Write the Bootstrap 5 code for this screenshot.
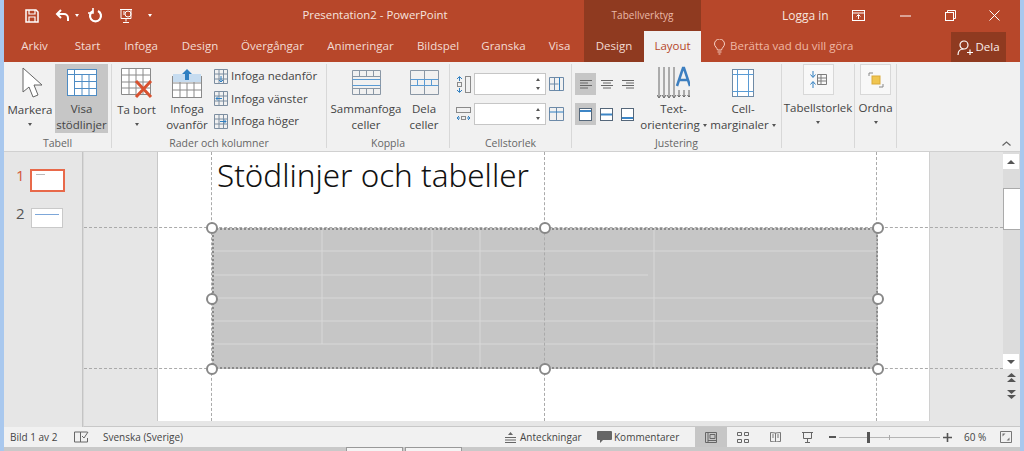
<!DOCTYPE html>
<html lang="sv">
<head>
  <meta charset="UTF-8" />
  <title>Presentation2 - PowerPoint</title>
  <meta name="viewport" content="width=device-width, initial-scale=1">
  <link href="https://cdn.jsdelivr.net/npm/bootstrap@5.3.3/dist/css/bootstrap.min.css" rel="stylesheet">
  <style>
    html, body { height: 451px; overflow: hidden; }
    body { font-family: "Open Sans", "Noto Sans", sans-serif; font-size: 11.5px; color: #444; background: #a9c8ee; line-height: 1.25; }
    svg { display: block; flex: none; }
    .app-win { margin: 0 4px; height: 447px; background: #e6e6e6; display: flex; flex-direction: column; }
    .below-win { height: 4px; background: #c9c9c9; margin: 0 4px; display: flex; padding-left: 342px; gap: 2px; }
    .below-win span { border: 1px solid #999; border-bottom: 0; width: 57px; background: #f4f4f4; }

    /* title bar */
    .title-row { height: 31px; background: #b7472a; color: #fff; position: relative; display: flex; align-items: center; }
    .qat { display: flex; align-items: center; padding-left: 21px; width: 580px; }
    .qat .drop-mark { border-top-color: #fff; }
    .doc-name { position: absolute; left: 271px; width: 200px; text-align: center; font-size: 11.4px; color: #f6e4de; }
    .ctx-head { width: 117px; height: 31px; background: #8f3a20; color: #eab9a8; font-size: 10px; display: flex; align-items: center; justify-content: center; }
    .win-ctl { display: flex; align-items: center; flex: 1; color: #f6e4de; }
    .login { margin-left: 81px; width: 46px; font-size: 12px; white-space: nowrap; }
    .wc-a { margin-left: 24px; }
    .wc-b { margin-left: 35px; }
    .wc-c { margin-left: 34px; }
    .wc-d { margin-left: 33px; }
    .qat-gap { margin-left: 13px; }

    /* tabs */
    .tab-row { height: 31px; background: #b7472a; display: flex; align-items: stretch; color: #f3dcd4; }
    .tab-item { display: flex; align-items: center; justify-content: center; }
    .tw-arkiv { width: 61px; }
    .tw-start { width: 45px; }
    .tw-infoga { width: 62px; }
    .tw-design { width: 56px; }
    .tw-over { width: 89px; }
    .tw-anim { width: 87px; }
    .tw-bild { width: 68px; }
    .tw-gran { width: 63px; }
    .tw-visa { width: 49px; }
    .tw-ctx { width: 60px; }
    .tw-layout { width: 57px; }
    .tab-ctx { background: #8f3a20; }
    .tab-on { background: #f1f1f1; color: #b7472a; }
    .tell-me { display: flex; align-items: center; gap: 5px; margin-left: 13px; width: 237px; color: #efb7a4; }
    .share-btn { width: 55px; background: #8f3a20; color: #fbeee9; display: flex; align-items: center; justify-content: center; gap: 2px; margin: 1px 0 0; }

    /* ribbon */
    .rib { height: 89px; background: #f1f1f1; display: flex; border-bottom: 1px solid #d0d0d0; box-sizing: content-box; position: relative; color: #444; }
    .rib-grp { position: relative; height: 84px; margin-top: 2px; border-right: 1px solid #d8d8d8; padding-bottom: 15px; display: flex; }
    .gw-tabell { width: 108px; }
    .gw-rader { width: 215px; padding-left: 4px; }
    .gw-koppla { width: 123px; padding-left: 3px; }
    .gw-size { width: 122px; padding-left: 6px; }
    .gw-just { width: 210px; padding-left: 3px; }
    .gw-tblsize { width: 73px; justify-content: center; }
    .gw-ordna { width: 42px; justify-content: center; }
    .grp-name { position: absolute; left: 0; right: 0; bottom: -2px; text-align: center; font-size: 10.5px; color: #666; }
    .big-btn { display: flex; flex-direction: column; align-items: center; height: 69px; text-align: center; line-height: 16px; white-space: nowrap; }
    .big-btn .pic { height: 38px; display: flex; align-items: center; justify-content: center; }
    .big-on { background: #c6c6c6; }
    .bw-markera { width: 50px; margin-left: 1px; }
    .bw-markera svg { margin-left: 5px; }
    .bw-visa { width: 53px; }
    .bw-tabort { width: 41px; }
    .bw-ovan { width: 50px; margin-left: 5px; }
    .bw-samman { width: 72px; }
    .bw-dela { width: 44px; }
    .bw-text { width: 67px; }
    .bw-cell { width: 72px; }
    .drop-mark { width: 0; height: 0; border: 2.5px solid transparent; border-top: 3px solid #555; border-bottom: 0; display: inline-block; vertical-align: middle; }
    .big-btn > .drop-mark { margin-top: 5px; }
    .small-list { display: flex; flex-direction: column; gap: 6px; padding-top: 4px; margin-left: 2px; }
    .small-btn { display: flex; align-items: center; gap: 3px; height: 16.5px; white-space: nowrap; }
    .cell-stack { display: flex; flex-direction: column; gap: 8px; padding-top: 9px; }
    .cell-stack.align-part { width: 65px; }
    .size-row { display: flex; align-items: center; gap: 3px; }
    .size-box { width: 72px; height: 22px; background: #fff; border: 1px solid #c6c6c6; position: relative; }
    .size-box::before, .size-box::after { content: ""; position: absolute; right: 5px; border: 2.5px solid transparent; }
    .size-box::before { top: 4px; border-bottom: 3px solid #555; border-top: 0; }
    .size-box::after { bottom: 4px; border-top: 3px solid #555; border-bottom: 0; }
    .align-cell { width: 21px; height: 22px; display: flex; align-items: center; justify-content: center; }
    .align-on { background: #c6c6c6; }
    .box-btn { width: 31px; height: 31px; background: #f8f8f8; border: 1px solid #d8d8d8; display: flex; align-items: center; justify-content: center; margin-bottom: 5px; }
    .rib-fold { position: absolute; right: 9px; bottom: 5px; }

    /* work area */
    .work-row { flex: 1; min-height: 0; display: flex; }
    .thumb-pane { width: 79px; flex: none; background: #e6e6e6; border-right: 1px solid #c4c4c4; padding-top: 17px; }
    .thumb-row { display: flex; gap: 5px; padding-left: 12px; font-size: 15px; align-items: flex-start; height: 20px; margin-bottom: 19px; line-height: 1; color: #555; }
    .thumb-row > span { margin-top: -1px; }
    .thumb-row.is-cur { color: #d4583a; }
    .thumb-row:not(.is-cur) > span { margin-top: -2px; }
    .thumb-pic { width: 32px; height: 20px; background: #fff; border: 1px solid #c9c9c9; position: relative; margin-left: 1px; }
    .is-cur .thumb-pic { width: 35px; height: 23px; border: 2px solid #e8694a; margin-left: 0; }
    .is-cur .thumb-pic::after { content: ""; position: absolute; left: 4px; top: 3px; width: 9px; height: 1px; background: #bbb; }
    .thumb-pic i { position: absolute; left: 3px; right: 3px; top: 5px; height: 1px; background: #7da7d9; }

    .stage-wrap { flex: 1; min-width: 0; position: relative; border-bottom: 1px solid #c8c8c8; border-left: 1px solid #d8d8d8; display: flex; justify-content: center; }
    .slide-sheet { position: absolute; left: 73px; top: 0; bottom: 5px; width: 773px; background: #fff; border-left: 1px solid #c8c8c8; border-right: 1px solid #d0d0d0; }
    .slide-head { position: absolute; left: 133px; top: 1px; font-family: "Noto Sans", "Open Sans", sans-serif; font-weight: 300; font-size: 31.4px; line-height: 44px; color: #111; white-space: nowrap; }
    .guide-h { position: absolute; left: 0; width: 919px; border-top: 1px dashed #aaa; }
    .gh-top { top: 75px; }
    .gh-bot { top: 216px; }
    .guide-v { position: absolute; top: 0; bottom: 5px; border-left: 1px dashed #aaa; }
    .gv-l { left: 127px; }
    .gv-m { left: 460px; }
    .gv-r { left: 792px; }
    .tbl-area { position: absolute; left: 128px; top: 76px; width: 666px; height: 141px; background: #c6c6c6; border: 2px dotted #8a8a8a; }
    .tbl-area svg { width: 100%; height: 100%; }
    .grab { position: absolute; width: 12px; height: 12px; border-radius: 50%; background: #fff; border: 2px solid #888; margin: -6px 0 0 -6px; }
    .gx-l { left: 128px; }
    .gx-m { left: 461px; }
    .gx-r { left: 794px; }
    .gy-t { top: 76px; }
    .gy-m { top: 147px; }
    .gy-b { top: 217px; }

    .scroll-col { width: 17px; flex: none; background: #dcdcdc; position: relative; display: flex; flex-direction: column; align-items: stretch; margin-left: auto; }
    .sc-btn { height: 15px; margin: 2px 1px 0 0; background: #fff; display: flex; align-items: center; justify-content: center; }
    .sc-btn .drop-mark { border-width: 4px; border-top-width: 4px; border-bottom: 0; }
    .sc-btn .up-mark { border-top: 0; border-bottom: 4px solid #555; }
    .sc-thumb { height: 42px; margin-top: 19px; background: #fff; border: 1px solid #aaa; border-right: 0; }
    .sc-gap { flex: 1; }
    .sc-tail { background: #e6e6e6; height: 57px; display: flex; flex-direction: column; align-items: center; gap: 6px; padding-top: 4px; }

    /* status bar */
    .stat-row { height: 20px; background: #f1f1f1; display: flex; align-items: center; font-size: 10px; color: #444; flex: none; white-space: nowrap; }
    .stat-left { width: 501px; display: flex; align-items: center; padding-left: 6px; }
    .st-bild { width: 64px; }
    .st-book { margin-right: 14px; }
    .st-note { margin-left: 4px; width: 77px; }
    .st-comm { margin-left: 2px; width: 81px; }
    .view-cell { height: 20px; width: 32px; display: flex; align-items: center; justify-content: center; }
    .view-a { width: 32px; }
    .zoom-minus { margin-left: 6px; }
    .zoom-track { position: relative; width: 101px; height: 1px; background: #b5b5b5; margin: 0 3px; }
    .zoom-thumb { position: absolute; left: 28px; top: -5px; width: 3px; height: 11px; background: #555; }
    .zoom-tick { position: absolute; left: 50px; top: -2px; width: 1px; height: 5px; background: #aaa; }
    .zoom-val { margin-left: 12px; width: 36px; }
  </style>
</head>
<body>
<div class="app-win">
  <div class="title-row">
    <div class="qat">
      <svg width="14" height="14" viewBox="0 0 14 14" fill="none" stroke="#fff" stroke-width="1.5"><path d="M1 1h10l2 2v10H1z"/><path d="M4 1v4h6V1M4 13V8h6v5" stroke-width="1.2"/></svg>
      <svg class="ms-3" width="16" height="14" viewBox="0 0 16 14" fill="none" stroke="#fff" stroke-width="2"><path d="M6 1 2 5l4 4"/><path d="M2 5h7a4 4 0 0 1 4 4v3"/></svg>
      <span class="drop-mark ms-1"></span>
      <svg class="ms-2" width="16" height="16" viewBox="0 0 16 16" fill="none" stroke="#fff" stroke-width="2.2"><path d="M6 3a5.500 5.500 0 1 0 5 0"/><path d="M6 0v5H1" stroke-width="1.6"/></svg>
      <svg class="ms-3" width="16" height="16" viewBox="0 0 16 16" fill="none" stroke="#fff" stroke-width="1"><path d="M1 1.500h12M2 1.500v9h10v-9M7 10.500v3M4 14.500h6"/><circle cx="9" cy="6" r="3"/><path d="M4 4h2M4 6h2"/></svg>
      <span class="drop-mark qat-gap"></span>
    </div>
    <div class="doc-name">Presentation2 - PowerPoint</div>
    <div class="ctx-head">Tabellverktyg</div>
    <div class="win-ctl">
      <div class="login">Logga in</div>
      <svg class="wc-a" width="13" height="11" viewBox="0 0 13 11" fill="none" stroke="#fff"><rect x=".5" y=".5" width="12" height="10"/><path d="M.5 3h12M6.500 9V5M4.500 6.500l2-2 2 2"/></svg>
      <svg class="wc-b" width="11" height="2" viewBox="0 0 11 2"><path d="M0 1h11" stroke="#fff"/></svg>
      <svg class="wc-c" width="11" height="11" viewBox="0 0 11 11" fill="none" stroke="#fff"><rect x=".5" y="2.500" width="8" height="8"/><path d="M2.500 2.500v-2h8v8h-2"/></svg>
      <svg class="wc-d" width="11" height="11" viewBox="0 0 11 11" fill="none" stroke="#fff"><path d="M.5.500l10 10M10.500.500l-10 10"/></svg>
    </div>
  </div>

  <div class="tab-row">
    <div class="tab-item tw-arkiv">Arkiv</div>
    <div class="tab-item tw-start">Start</div>
    <div class="tab-item tw-infoga">Infoga</div>
    <div class="tab-item tw-design">Design</div>
    <div class="tab-item tw-over">Övergångar</div>
    <div class="tab-item tw-anim">Animeringar</div>
    <div class="tab-item tw-bild">Bildspel</div>
    <div class="tab-item tw-gran">Granska</div>
    <div class="tab-item tw-visa">Visa</div>
    <div class="tab-item tab-ctx tw-ctx">Design</div>
    <div class="tab-item tab-on tw-layout">Layout</div>
    <div class="tell-me">
      <svg width="11" height="16" viewBox="0 0 11 16" fill="none" stroke="#f6cfc2"><path d="M3.500 11C3 8.500.5 7.500.5 5a5 5 0 0 1 10 0c0 2.500-2.500 3.500-3 6z"/><path d="M3.500 13h4M4.500 15h2"/></svg>
      <span>Berätta vad du vill göra</span>
    </div>
    <div class="share-btn">
      <svg width="16" height="15" viewBox="0 0 16 15" fill="none" stroke="#fff" stroke-width="1.2"><circle cx="7" cy="5" r="4"/><path d="M1 15c0-4 2.500-6 5.500-6M10 12.500h6M13 9.500v6"/></svg>
      <span>Dela</span>
    </div>
  </div>

  <div class="rib">
    <div class="rib-grp gw-tabell">
      <div class="big-btn bw-markera">
        <div class="pic"><svg width="22" height="33" viewBox="0 0 22 33" fill="#fff" stroke="#666"><path d="M1 1v24l6-5 4 10 5-2-4-10h8z"/></svg></div>
        <span>Markera</span>
        <span class="drop-mark"></span>
      </div>
      <div class="big-btn big-on bw-visa">
        <div class="pic"><svg width="30" height="27" viewBox="0 0 30 27" fill="none" stroke="#4e8cc4"><rect x=".5" y=".5" width="29" height="26" fill="#fff"/><path d="M.5 5.500h29M7.500.5v26M7.500 12.500h22M7.500 19.500h22M15 5.500v21M22 5.500v21"/></svg></div>
        <span>Visa<br>stödlinjer</span>
      </div>
      <div class="grp-name">Tabell</div>
    </div>

    <div class="rib-grp gw-rader">
      <div class="big-btn bw-tabort">
        <div class="pic"><svg width="32" height="31" viewBox="0 0 32 31" fill="none"><path d="M.5.500h29v26H.5zM.5 7h29M.5 14h29M.5 20h29M8 .500v26M15 .500v26M22 .500v26" stroke="#8a8a8a" fill="#fff"/><path d="M15 13l15 16M30 13 15 29" stroke="#d8512f" stroke-width="3"/></svg></div>
        <span>Ta bort</span>
        <span class="drop-mark"></span>
      </div>
      <div class="big-btn bw-ovan">
        <div class="pic"><svg width="30" height="30" viewBox="0 0 30 30" fill="none"><rect x=".5" y="8.500" width="29" height="21" fill="#fff" stroke="#8a8a8a"/><path d="M.5 15h29M.5 22h29M8 8.500v21M15 15v15M22 8.500v21" stroke="#8a8a8a"/><rect x="1" y="6" width="28" height="8" fill="#c6dcf0"/><path d="M15 1l5 5h-3v6h-4V6h-3z" fill="#2f7fc1"/></svg></div>
        <span>Infoga<br>ovanför</span>
      </div>
      <div class="small-list">
        <div class="small-btn"><svg width="14" height="15" viewBox="0 0 14 15" fill="none" stroke="#7d8ea0"><path d="M.5.500h13v14H.5zM5 .500v14M9.500.500v14M.5 5h13M.5 10h13"/><path d="M7 7v6M5 11l2 2 2-2" stroke="#2f7fc1"/></svg><span>Infoga nedanför</span></div>
        <div class="small-btn"><svg width="14" height="15" viewBox="0 0 14 15" fill="none" stroke="#7d8ea0"><path d="M.5.500h13v14H.5zM5 .500v14M9.500.500v14M.5 5h13M.5 10h13"/><path d="M8 7.500H2M4 5.500l-2 2 2 2" stroke="#2f7fc1"/></svg><span>Infoga vänster</span></div>
        <div class="small-btn"><svg width="14" height="15" viewBox="0 0 14 15" fill="none" stroke="#7d8ea0"><path d="M.5.500h13v14H.5zM5 .500v14M9.500.500v14M.5 5h13M.5 10h13"/><path d="M6 7.500h6M10 5.500l2 2-2 2" stroke="#2f7fc1"/></svg><span>Infoga höger</span></div>
      </div>
      <div class="grp-name">Rader och kolumner</div>
    </div>

    <div class="rib-grp gw-koppla">
      <div class="big-btn bw-samman">
        <div class="pic"><svg width="29" height="25" viewBox="0 0 29 25" fill="none" stroke="#8a97a5"><path d="M.5.500h28v24H.5zM.5 6.500h28M.5 18.500h28M7.500.500v6M14.500.500v6M21.500.500v6M7.500 18.500v6M14.500 18.500v6M21.500 18.500v6"/><path d="M.5 9.500h28M.5 15.500h28" stroke="#5a9bd4"/></svg></div>
        <span>Sammanfoga<br>celler</span>
      </div>
      <div class="big-btn bw-dela">
        <div class="pic"><svg width="29" height="25" viewBox="0 0 29 25" fill="none" stroke="#8a97a5"><path d="M.5.500h28v24H.5zM.5 9.500h28M.5 15.500h28M14.500.500v9M14.500 15.500v9"/><path d="M7.500 9.500v6M14.500 9.500v6M21.500 9.500v6M.5 9.500h28M.5 15.500h28" stroke="#5a9bd4"/></svg></div>
        <span>Dela<br>celler</span>
      </div>
      <div class="grp-name">Koppla</div>
    </div>

    <div class="rib-grp gw-size">
      <div class="cell-stack">
        <div class="size-row">
          <svg width="15" height="17" viewBox="0 0 15 17" fill="none" stroke="#2f7fc1"><path d="M3.500 1v4M3.500 12v4M1 3l2.500-2.500L6 3M1 14l2.500 2.500L6 14"/><rect x="1.500" y="6.500" width="4" height="4" stroke="#8a8a8a"/><rect x="9.500" y=".5" width="5" height="16" stroke="#8a8a8a"/></svg>
          <div class="size-box"></div>
          <svg width="15" height="14" viewBox="0 0 15 14" fill="none" stroke="#6d8aa8"><path d="M.5.500h14v13H.5zM5.500.500v13M.5 7h9"/><path d="M10.500 .5v13" stroke="#2f7fc1"/></svg>
        </div>
        <div class="size-row">
          <svg width="15" height="17" viewBox="0 0 15 17" fill="none" stroke="#2f7fc1"><rect x=".5" y="1.500" width="14" height="5" stroke="#8a8a8a"/><path d="M1 12h3M11 12h3M3 10l-2 2 2 2M12 10l2 2-2 2"/><rect x="5.500" y="10.500" width="4" height="3" stroke="#8a8a8a"/></svg>
          <div class="size-box"></div>
          <svg width="15" height="14" viewBox="0 0 15 14" fill="none" stroke="#6d8aa8"><path d="M.5.500h14v13H.5zM7.500 .5v13"/><path d="M.5 5h14" stroke="#2f7fc1"/></svg>
        </div>
      </div>
      <div class="grp-name">Cellstorlek</div>
    </div>

    <div class="rib-grp gw-just">
      <div class="cell-stack align-part">
        <div class="d-flex">
          <div class="align-cell align-on"><svg width="12" height="9" viewBox="0 0 12 9" stroke="#666"><path d="M0 .5h12M0 3h8M0 5.500h12M0 8h8"/></svg></div>
          <div class="align-cell"><svg width="12" height="9" viewBox="0 0 12 9" stroke="#666"><path d="M0 .5h12M2 3h8M0 5.500h12M2 8h8"/></svg></div>
          <div class="align-cell"><svg width="12" height="9" viewBox="0 0 12 9" stroke="#666"><path d="M0 .5h12M4 3h8M0 5.500h12M4 8h8"/></svg></div>
        </div>
        <div class="d-flex">
          <div class="align-cell align-on"><svg width="13" height="13" viewBox="0 0 13 13" fill="#fff" stroke="#55677a"><rect x=".5" y=".5" width="12" height="12"/><path d="M1 3h11" stroke="#3d86c6" stroke-width="2"/></svg></div>
          <div class="align-cell"><svg width="13" height="13" viewBox="0 0 13 13" fill="#fff" stroke="#55677a"><rect x=".5" y=".5" width="12" height="12"/><path d="M1 6.500h11" stroke="#3d86c6" stroke-width="2"/></svg></div>
          <div class="align-cell"><svg width="13" height="13" viewBox="0 0 13 13" fill="#fff" stroke="#55677a"><rect x=".5" y=".5" width="12" height="12"/><path d="M1 10h11" stroke="#3d86c6" stroke-width="2"/></svg></div>
        </div>
      </div>
      <div class="big-btn bw-text">
        <div class="pic"><svg width="33" height="34" viewBox="0 0 33 34" fill="none"><path d="M2 1v30M7 1v30M12 1v30M17 1v30M0 29l2 3 2-3M5 29l2 3 2-3M10 29l2 3 2-3M15 29l2 3 2-3" stroke="#666"/><path d="M20 20 26 2h1l6 18M22.500 14h8" stroke="#3d7fc0" stroke-width="2.500"/><path d="M22 24v7M27 24v7M32 24v7M20.500 29l1.500 2 1.500-2M25.500 29l1.500 2 1.500-2M30.500 29l1.500 2 1.500-2" stroke="#666"/></svg></div>
        <span>Text-<br>orientering <span class="drop-mark"></span></span>
      </div>
      <div class="big-btn bw-cell">
        <div class="pic"><svg width="22" height="28" viewBox="0 0 22 28" fill="#fff" stroke="#6f8aa5"><rect x=".5" y=".5" width="21" height="27"/><path d="M5.500.500v27M16.500.500v27M.5 5.500h21M.5 22.500h21" stroke="#5a9bd4"/></svg></div>
        <span>Cell-<br>marginaler <span class="drop-mark"></span></span>
      </div>
      <div class="grp-name">Justering</div>
    </div>

    <div class="rib-grp gw-tblsize">
      <div class="big-btn">
        <div class="box-btn"><svg width="18" height="17" viewBox="0 0 18 17" fill="none"><path d="M4 0v6M1.500 3.500 4 6.500l2.500-3M4 17v-6M1.500 13.500 4 10.500l2.500 3" stroke="#2f7fc1"/><path d="M8.500 3.500h9v10h-9zM8.500 7h9M8.500 10h9M12 3.500v10" stroke="#7d7d7d"/></svg></div>
        <span>Tabellstorlek</span>
        <span class="drop-mark"></span>
      </div>
    </div>

    <div class="rib-grp gw-ordna">
      <div class="big-btn">
        <div class="box-btn"><svg width="16" height="16" viewBox="0 0 16 16" fill="none"><path d="M1 4V1h4M15 12v3h-4" stroke="#888"/><rect x="4" y="4" width="8" height="8" fill="#f0c54f" stroke="#d9a93a"/></svg></div>
        <span>Ordna</span>
        <span class="drop-mark"></span>
      </div>
    </div>

    <svg class="rib-fold" width="9" height="5" viewBox="0 0 9 5" fill="none" stroke="#666" stroke-width="1.2"><path d="M.5 4.500 4.500 1l4 3.500"/></svg>
  </div>

  <div class="work-row">
    <div class="thumb-pane">
      <div class="thumb-row is-cur"><span>1</span><div class="thumb-pic"></div></div>
      <div class="thumb-row"><span>2</span><div class="thumb-pic"><i></i></div></div>
    </div>
    <div class="stage-wrap">
      <div class="slide-sheet"></div>
      <div class="guide-h gh-top"></div>
      <div class="guide-h gh-bot"></div>
      <div class="slide-head">Stödlinjer och tabeller</div>
      <div class="tbl-area">
        <svg viewBox="0 0 662 137" preserveAspectRatio="none" stroke="#d8d8d8" fill="none">
          <path d="M108 0v114M218 0v137M266 0v137M440 0v137M0 21h662M0 45h434M0 68h662M0 91h662M0 114h662"/>
        </svg>
      </div>
      <div class="guide-v gv-l"></div>
      <div class="guide-v gv-m"></div>
      <div class="guide-v gv-r"></div>
      <span class="grab gx-l gy-t"></span>
      <span class="grab gx-m gy-t"></span>
      <span class="grab gx-r gy-t"></span>
      <span class="grab gx-l gy-m"></span>
      <span class="grab gx-r gy-m"></span>
      <span class="grab gx-l gy-b"></span>
      <span class="grab gx-m gy-b"></span>
      <span class="grab gx-r gy-b"></span>
      <div class="scroll-col">
        <div class="sc-btn"><span class="drop-mark up-mark"></span></div>
        <div class="sc-thumb"></div>
        <div class="sc-gap"></div>
        <div class="sc-btn"><span class="drop-mark"></span></div>
        <div class="sc-tail">
          <svg width="9" height="10" viewBox="0 0 9 10" fill="#555"><path d="M4.500 0 9 4H0zM4.500 5 9 9H0z"/></svg>
          <svg width="9" height="10" viewBox="0 0 9 10" fill="#555"><path d="M4.500 5 0 1h9zM4.500 10 0 6h9z"/></svg>
        </div>
      </div>
    </div>
  </div>

  <div class="stat-row">
    <div class="stat-left">
      <span class="st-bild">Bild 1 av 2</span>
      <svg class="st-book" width="15" height="12" viewBox="0 0 15 12" fill="none" stroke="#666"><path d="M.5 1h6v10h-6zM6.500 1h7M6.500 11h7M13.500 7v4M8 5l2 2 4-6"/></svg>
      <span>Svenska (Sverige)</span>
    </div>
    <svg width="11" height="11" viewBox="0 0 11 11" fill="#666" stroke="#666"><path d="M5.500 0 8 3H3z" stroke="none"/><path d="M0 5.500h11M0 8h11M0 10.500h11" fill="none"/></svg>
    <span class="st-note">Anteckningar</span>
    <svg width="15" height="13" viewBox="0 0 15 13" fill="#666"><path d="M1 0h13a1 1 0 0 1 1 1v7a1 1 0 0 1-1 1H6l-3 3V9H1a1 1 0 0 1-1-1V1a1 1 0 0 1 1-1z"/></svg>
    <span class="st-comm">Kommentarer</span>
    <div class="view-cell align-on"><svg width="12" height="11" viewBox="0 0 12 11" fill="none" stroke="#666"><path d="M.5.500h11v10H.5zM3 .500v10M5 2.500h5v4H5zM3 8.500h8"/></svg></div>
    <div class="view-cell"><svg width="12" height="11" viewBox="0 0 12 11" fill="none" stroke="#666"><path d="M.5.500h4v3h-4zM7.500.500h4v3h-4zM.5 7.500h4v3h-4zM7.500 7.500h4v3h-4z"/></svg></div>
    <div class="view-cell"><svg width="11" height="10" viewBox="0 0 11 10" fill="none" stroke="#777"><path d="M5.500 1 .5.500v9l5 .500 5-.500v-9zM5.500 1v9M2 3h2M2 5h2M7 3h2M7 5h2"/></svg></div>
    <div class="view-cell"><svg width="11" height="11" viewBox="0 0 11 11" fill="none" stroke="#666"><path d="M0 .5h11M1.500 .5v6h8v-6M5.500 6.500v4M3 10.500h5"/></svg></div>
    <svg class="zoom-minus" width="7" height="2" viewBox="0 0 7 2"><path d="M0 1h7" stroke="#555" stroke-width="2"/></svg>
    <div class="zoom-track"><span class="zoom-thumb"></span><span class="zoom-tick"></span></div>
    <svg width="9" height="9" viewBox="0 0 9 9"><path d="M0 4.500h9M4.500 0v9" stroke="#555" stroke-width="1.600"/></svg>
    <span class="zoom-val">60 %</span>
    <svg width="12" height="12" viewBox="0 0 12 12" fill="none" stroke="#777"><path d="M.5.500h11v11H.5z"/><path d="M2.500 2.500h3l-3 3zM9.500 9.500h-3l3-3z" fill="#777" stroke="none"/></svg>
  </div>
</div>
<div class="below-win"><span></span><span></span></div>
</body>
</html>
